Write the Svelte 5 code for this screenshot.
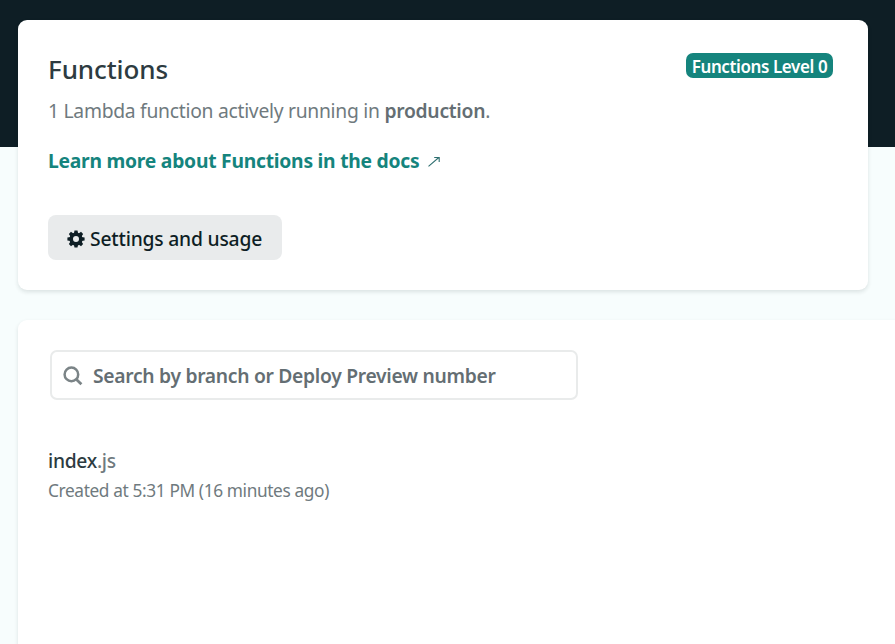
<script>
  const teeth = [0, 45, 90, 135, 180, 225, 270, 315];
</script>

<div class="page">
  <main>
    <section class="card overview">
      <div class="intro">
        <h1>Functions</h1>
        <p class="status">1 Lambda function actively running in <strong>production</strong>.</p>
        <a class="docs" href="#docs">
          <span>Learn more about Functions in the docs</span>
          <svg width="12" height="11" viewBox="0 0 12 11" fill="none" stroke="#2f6f70" stroke-width="1.1">
            <path d="M.5 10.3 10.8 1.5M6.2 1.5h5v4.4" />
          </svg>
        </a>
        <button class="settings">
          <svg width="18" height="18" viewBox="0 0 18 18">
            {#each teeth as angle}
              <path d="M6.9 3.6 7.5.4h3l.6 3.2z" transform="rotate({angle} 9 9)" />
            {/each}
            <circle cx="9" cy="9" r="4.8" fill="none" stroke="currentColor" stroke-width="3.6" />
          </svg>
          <span>Settings and usage</span>
        </button>
      </div>
      <span class="badge"><span>Functions Level 0</span></span>
    </section>

    <section class="card list">
      <label class="search">
        <svg width="20" height="20" viewBox="0 0 20 20" fill="none" stroke="#7b8487" stroke-width="2.5">
          <circle cx="8.4" cy="8.4" r="6.8" />
          <path d="m13.2 13.2 5.2 5" stroke-width="2.8" />
        </svg>
        <span>Search by branch or Deploy Preview number</span>
      </label>
      <div class="function">
        <h2>index<span>.js</span></h2>
        <p>Created at 5:31 PM (16 minutes ago)</p>
      </div>
    </section>
  </main>
</div>

<style>
  .page {
    box-sizing: border-box;
    width: 100%;
    height: 644px;
    padding: 20px 0 0 18px;
    overflow: hidden;
    background: linear-gradient(#0e1e25 147px, #f7fdfd 147px);
    font-family: "Segoe UI", "Noto Sans", sans-serif;
    color: #2d3b41;
    white-space: nowrap;
  }
  h1, h2, p { margin: 0; }
  .card {
    box-sizing: border-box;
    background: #fff;
    box-shadow: 0 2px 4px rgba(14, 30, 37, 0.12);
  }
  .overview {
    display: flex;
    justify-content: space-between;
    align-items: flex-start;
    width: 850px;
    height: 270px;
    padding: 33px 35px 0 30px;
    border-radius: 9px;
  }
  .intro {
    display: flex;
    flex-direction: column;
    align-items: flex-start;
  }
  h1 {
    font-size: 26px;
    line-height: 32px;
    font-weight: 500;
    letter-spacing: -0.1px;
  }
  .status {
    margin-top: 11px;
    font-size: 19.3px;
    line-height: 30px;
    font-weight: 400;
    letter-spacing: -0.27px;
    color: #6f7a7e;
  }
  .status strong { font-weight: 600; color: #646e73; }
  .docs {
    display: flex;
    align-items: center;
    gap: 9px;
    margin-top: 20px;
    font-size: 19.3px;
    line-height: 30px;
    font-weight: 700;
    letter-spacing: -0.25px;
    color: #15847d;
    text-decoration: none;
  }
  .settings {
    display: flex;
    align-items: center;
    gap: 5px;
    width: 234px;
    height: 45px;
    margin-top: 39px;
    padding: 2px 0 0 19px;
    border: 0;
    border-radius: 8px;
    background: #e9ebec;
    color: #0e1e25;
    font: 500 19.3px "Segoe UI", "Noto Sans", sans-serif;
    letter-spacing: -0.2px;
  }
  .settings svg { fill: currentColor; }
  .badge {
    display: flex;
    align-items: center;
    justify-content: center;
    box-sizing: border-box;
    width: 147px;
    height: 25px;
    padding-top: 1px;
    border-radius: 7px;
    background: #15847d;
    color: #fff;
    font-size: 17px;
    font-weight: 600;
    letter-spacing: -0.4px;
  }
  .list {
    width: 900px;
    height: 350px;
    margin-top: 30px;
    padding: 30px;
    border-radius: 9px 0 0 0;
  }
  .search {
    display: flex;
    align-items: center;
    gap: 10px;
    box-sizing: border-box;
    width: 528px;
    height: 50px;
    margin-left: 2px;
    padding: 1px 0 0 11px;
    border: 2px solid #e9ebeb;
    border-radius: 7px;
    color: #646e73;
    font-size: 19.3px;
    font-weight: 600;
    letter-spacing: -0.3px;
  }
  .function { margin-top: 46px; }
  h2 {
    font-size: 19.3px;
    line-height: 30px;
    font-weight: 500;
    letter-spacing: -0.3px;
  }
  h2 span { color: #6f7a7e; }
  .function p {
    font-size: 17.3px;
    line-height: 30px;
    font-weight: 400;
    letter-spacing: -0.38px;
    color: #6f7a7e;
  }
</style>
